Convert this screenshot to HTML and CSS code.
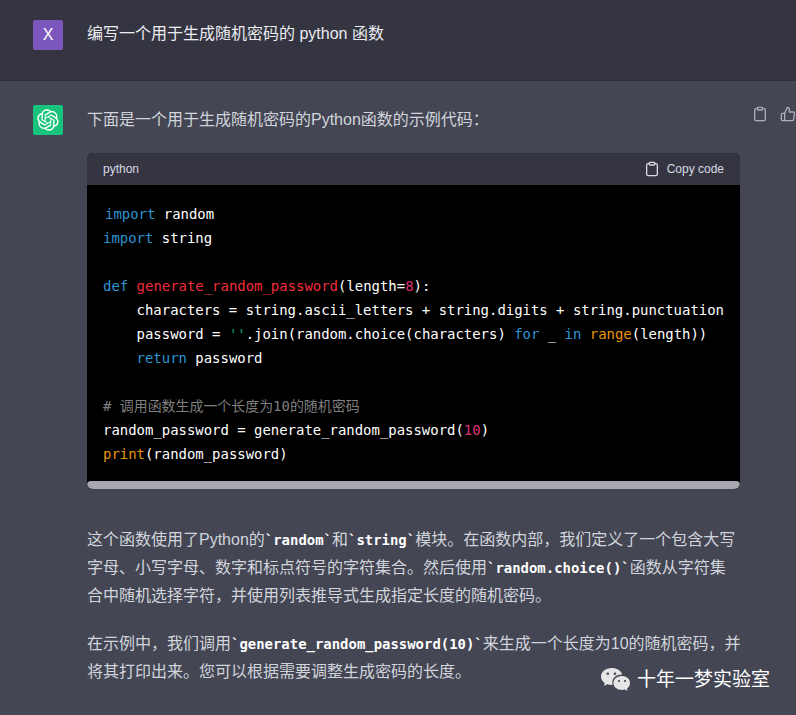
FILE: index.html
```html
<!DOCTYPE html>
<html lang="zh-CN">
<head>
  <meta charset="UTF-8">
  <meta name="viewport" content="width=device-width, initial-scale=1.0">
  <title>ChatGPT</title>
  <link rel="stylesheet" href="styles.css">
</head>
<body>

<div class="msg msg-user">
  <div class="avatar avatar-user">X</div>
  <div class="msg-body">编写一个用于生成随机密码的 python 函数</div>
</div>

<div class="msg msg-bot">
  <div class="avatar avatar-bot">
    <svg viewBox="0 0 41 41" width="22" height="22" fill="#fff">
      <path d="M37.5324 16.8707C37.9808 15.5241 38.1363 14.0974 37.9886 12.6859C37.8409 11.2744 37.3934 9.91076 36.676 8.68622C35.6126 6.83404 33.9882 5.3676 32.0373 4.4985C30.0864 3.62941 27.9098 3.40259 25.8215 3.85078C24.8796 2.7893 23.7219 1.94125 22.4257 1.36341C21.1295 0.785575 19.7249 0.491269 18.3058 0.500197C16.1708 0.495044 14.0893 1.16803 12.3614 2.42214C10.6335 3.67624 9.34853 5.44666 8.6917 7.47815C7.30085 7.76286 5.98686 8.3414 4.8377 9.17505C3.68854 10.0087 2.73073 11.0782 2.02839 12.312C0.956464 14.1591 0.498905 16.2988 0.721698 18.4228C0.944492 20.5467 1.83612 22.5449 3.268 24.1293C2.81966 25.4759 2.66413 26.9026 2.81182 28.3141C2.95951 29.7256 3.40701 31.0892 4.12437 32.3138C5.18791 34.1659 6.8123 35.6322 8.76321 36.5013C10.7141 37.3704 12.8907 37.5973 14.9789 37.1492C15.9208 38.2107 17.0786 39.0587 18.3747 39.6366C19.6709 40.2144 21.0755 40.5087 22.4946 40.4998C24.6307 40.5054 26.7133 39.8321 28.4418 38.5772C30.1704 37.3223 31.4556 35.5506 32.1119 33.5179C33.5027 33.2332 34.8167 32.6547 35.9659 31.821C37.115 30.9874 38.0728 29.9178 38.7752 28.684C39.8458 26.8371 40.3023 24.6979 40.0789 22.5748C39.8556 20.4517 38.9639 18.4544 37.5324 16.8707ZM22.4978 37.8849C20.7443 37.8874 19.0459 37.2733 17.6994 36.1501C17.7601 36.117 17.8666 36.0586 17.936 36.0161L25.9004 31.4156C26.1003 31.3019 26.2663 31.137 26.3813 30.9378C26.4964 30.7386 26.5563 30.5124 26.5549 30.2825V19.0542L29.9213 20.998C29.9389 21.0068 29.9541 21.0198 29.9656 21.0359C29.977 21.052 29.9842 21.0707 29.9867 21.0902V30.3889C29.9842 32.375 29.1946 34.2791 27.7909 35.6841C26.3872 37.0892 24.4838 37.8806 22.4978 37.8849ZM6.39227 31.0064C5.51397 29.4888 5.19742 27.7107 5.49804 25.9832C5.55718 26.0187 5.66048 26.0818 5.73461 26.1244L13.699 30.7248C13.8975 30.8408 14.1233 30.902 14.3532 30.902C14.583 30.902 14.8088 30.8408 15.0073 30.7248L24.731 25.1103V28.9979C24.7321 29.0177 24.7283 29.0376 24.7199 29.0556C24.7115 29.0736 24.6988 29.0893 24.6829 29.1012L16.6317 33.7497C14.9096 34.7416 12.8643 35.0097 10.9447 34.4954C9.02506 33.9811 7.38785 32.7263 6.39227 31.0064ZM4.29707 13.6194C5.17156 12.0998 6.55279 10.9364 8.19885 10.3327C8.19885 10.4013 8.19491 10.5228 8.19491 10.6071V19.808C8.19351 20.0378 8.25334 20.2638 8.36823 20.4629C8.48312 20.6619 8.64893 20.8267 8.84863 20.9404L18.5723 26.5542L15.206 28.4979C15.1894 28.5089 15.1703 28.5155 15.1505 28.5173C15.1307 28.5191 15.1107 28.516 15.0924 28.5082L7.04046 23.8557C5.32135 22.8601 4.06716 21.2235 3.55289 19.3046C3.03862 17.3858 3.30624 15.3413 4.29707 13.6194ZM31.955 20.0556L22.2312 14.4411L25.5976 12.4981C25.6142 12.4872 25.6333 12.4805 25.6531 12.4787C25.6729 12.4769 25.6928 12.4801 25.7111 12.4879L33.7631 17.1364C34.9967 17.849 36.0017 18.8982 36.6606 20.1613C37.3194 21.4244 37.6047 22.849 37.4832 24.2684C37.3617 25.6878 36.8382 27.0432 35.9743 28.1759C35.1103 29.3086 33.9415 30.1717 32.6047 30.6641C32.6047 30.5947 32.6047 30.4733 32.6047 30.3889V21.188C32.6066 20.9586 32.5474 20.7328 32.4332 20.5338C32.319 20.3348 32.154 20.1698 31.955 20.0556ZM35.3055 15.0128C35.2464 14.9765 35.1431 14.9142 35.069 14.8717L27.1045 10.2712C26.906 10.1554 26.6803 10.0943 26.4504 10.0943C26.2206 10.0943 25.9948 10.1554 25.7963 10.2712L16.0726 15.8858V11.9982C16.0715 11.9783 16.0753 11.9585 16.0837 11.9405C16.0921 11.9225 16.1048 11.9068 16.1207 11.8949L24.1719 7.25025C25.4053 6.53903 26.8158 6.19376 28.2383 6.25482C29.6608 6.31589 31.0364 6.78077 32.2044 7.59508C33.3723 8.40939 34.2842 9.53945 34.8334 10.8531C35.3826 12.1667 35.5464 13.6095 35.3055 15.0128ZM14.2424 21.9419L10.8752 19.9981C10.8576 19.9893 10.8423 19.9763 10.8309 19.9602C10.8195 19.9441 10.8122 19.9254 10.8098 19.9058V10.6071C10.8107 9.18295 11.2173 7.78848 11.9819 6.58696C12.7466 5.38544 13.8377 4.42659 15.1275 3.82264C16.4173 3.21869 17.8524 2.99464 19.2649 3.1767C20.6775 3.35876 22.0089 3.93941 23.1034 4.85067C23.0427 4.88379 22.937 4.94215 22.8668 4.98473L14.9024 9.58517C14.7025 9.69878 14.5366 9.86356 14.4215 10.0626C14.3065 10.2616 14.2466 10.4877 14.2479 10.7175L14.2424 21.9419ZM16.071 17.9991L20.4018 15.4978L24.7325 17.9975V22.9985L20.4018 25.4983L16.071 22.9985V17.9991Z"/>
    </svg>
  </div>
  <div class="msg-body">
    <p class="lead">下面是一个用于生成随机密码的Python函数的示例代码：</p>

    <div class="code-card">
      <div class="code-head">
        <span>python</span>
        <span class="copy">
          <svg class="clip" viewBox="0 0 24 24" width="16" height="16"><path d="M16 4h2a2 2 0 0 1 2 2v14a2 2 0 0 1-2 2H6a2 2 0 0 1-2-2V6a2 2 0 0 1 2-2h2"/><rect x="8" y="2" width="8" height="4" rx="1"/></svg>
          Copy code
        </span>
      </div>
      <pre class="code"><span class="first"><span class="kw">import</span> random</span>
<span class="kw">import</span> string

<span class="kw">def</span> <span class="fn">generate_random_password</span>(length=<span class="num">8</span>):
    characters = string.ascii_letters + string.digits + string.punctuation
    password = <span class="str">''</span>.join(random.choice(characters) <span class="kw">for</span> _ <span class="kw">in</span> <span class="bi">range</span>(length))
    <span class="kw">return</span> password

<span class="cm"># 调用函数生成一个长度为10的随机密码</span>
random_password = generate_random_password(<span class="num">10</span>)
<span class="bi">print</span>(random_password)</pre>
      <div class="scrollbar"></div>
    </div>

    <p class="para">这个函数使用了Python的<code>`random`</code>和<code>`string`</code>模块。在函数内部，我们定义了一个包含大写<br>字母、小写字母、数字和标点符号的字符集合。然后使用<code>`random.choice()`</code>函数从字符集<br>合中随机选择字符，并使用列表推导式生成指定长度的随机密码。</p>
    <p class="para">在示例中，我们调用<code>`generate_random_password(10)`</code>来生成一个长度为10的随机密码，并<br>将其打印出来。您可以根据需要调整生成密码的长度。</p>
  </div>

  <div class="actions">
    <svg class="clip" viewBox="0 0 24 24" width="16" height="16"><path d="M16 4h2a2 2 0 0 1 2 2v14a2 2 0 0 1-2 2H6a2 2 0 0 1-2-2V6a2 2 0 0 1 2-2h2"/><rect x="8" y="2" width="8" height="4" rx="1"/></svg>
    <svg class="clip" viewBox="0 0 24 24" width="16" height="16"><path d="M14 9V5a3 3 0 0 0-3-3l-4 9v11h11.3a2 2 0 0 0 2-1.7l1.4-9a2 2 0 0 0-2-2.3z"/><path d="M7 22H4a2 2 0 0 1-2-2v-7a2 2 0 0 1 2-2h3"/></svg>
  </div>
</div>

<!-- 水印 -->
<div class="watermark">
  <svg viewBox="0 0 32 26" width="32" height="26">
    <path fill="#e6e6e6" d="M11.5 1C5.7 1 1 4.8 1 9.6c0 2.7 1.5 5 3.8 6.6L3.9 19l3.3-1.7c1.3.4 2.7.6 4.3.6.4 0 .8 0 1.2-.1-.3-.8-.4-1.6-.4-2.4 0-4.4 4.2-7.9 9.4-7.9h.5C21 3.4 16.6 1 11.5 1z"/>
    <path fill="#e6e6e6" d="M22 9c-4.8 0-8.6 3.1-8.6 7s3.8 7 8.6 7c1 0 2-.1 2.9-.4l2.7 1.5-.7-2.4c1.9-1.3 3.1-3.3 3.1-5.6C30 12.1 26.6 9 22 9z"/>
    <circle cx="7.8" cy="6.8" r="1.3" fill="#444654"/><circle cx="15" cy="6.8" r="1.3" fill="#444654"/>
    <circle cx="19" cy="14" r="1.1" fill="#444654"/><circle cx="25" cy="14" r="1.1" fill="#444654"/>
  </svg>
  <span>十年一梦实验室</span>
</div>

</body>
</html>
```

FILE: styles.css
```css
html, body {
  height: 100%;
}
body {
  font-family: "Liberation Sans", "Noto Sans CJK SC", sans-serif;
  font-size: 16px;
  line-height: 28px;
  background-color: #444654;
  color: #d1d5db;
  margin: 0;
  padding: 0;
  overflow: hidden;
  position: relative;
}
.msg {
  display: flex;
  gap: 24px;
  padding-left: 33px;
  position: relative;
}
.msg-user {
  background-color: #343541;
  padding-top: 20px;
  border-bottom: 1px solid #2f3039;
  height: 60px;
  color: #ececf1;
}
.msg-bot {
  background-color: #444654;
  padding-top: 24px;
}
.msg-body {
  width: 653px;
}
.avatar {
  width: 30px;
  height: 30px;
  border-radius: 2px;
  flex: none;
  display: flex;
  align-items: center;
  justify-content: center;
  color: #fff;
}
.avatar-user {
  background-color: #7b57bd;
  font-size: 16px;
}
.avatar-bot {
  background-color: #19c37d;
}
.lead {
  margin: 1px 0 19px;
}
.code-card {
  border-radius: 6px;
  overflow: hidden;
  background: #000;
}
.code-head {
  display: flex;
  justify-content: space-between;
  align-items: center;
  height: 32px;
  padding: 0 16px;
  background-color: #343541;
  font-size: 12px;
  line-height: 16px;
  color: #d9d9e3;
}
.copy {
  display: flex;
  align-items: center;
  gap: 7px;
}
.clip {
  fill: none;
  stroke: #acacbe;
  stroke-width: 2;
  stroke-linecap: round;
  stroke-linejoin: round;
}
.copy .clip {
  stroke: #d9d9e3;
}
.code {
  margin: 0;
  padding: 17px 16px 15px;
  font-family: "DejaVu Sans Mono", "Noto Sans CJK SC", monospace;
  font-size: 13.95px;
  line-height: 24px;
  color: #fff;
  overflow: hidden;
}
.first {
  margin-left: 2px;
}
.kw { color: #2e95d3; }
.fn { color: #f22c3d; }
.num { color: #df3079; }
.str { color: #00a67d; }
.bi { color: #e9950c; }
.cm { color: #7f7f7f; }
.scrollbar {
  height: 8px;
  background-color: #a8a8b0;
  border-radius: 4px;
}
.para {
  margin: 0 -8px 20px 0;
}
.code-card + .para {
  margin-top: 37px;
}
.para code {
  font-family: "DejaVu Sans Mono", monospace;
  font-size: 13.95px;
  line-height: 1;
  font-weight: bold;
  color: #fff;
}
.actions {
  position: absolute;
  top: 25px;
  left: 752px;
  display: flex;
  gap: 12px;
  width: 44px;
  overflow: hidden;
}
.actions svg {
  flex: none;
}
.watermark {
  position: absolute;
  left: 600px;
  top: 666px;
  display: flex;
  align-items: center;
  gap: 5px;
  font-size: 19px;
  color: #fff;
}
```
